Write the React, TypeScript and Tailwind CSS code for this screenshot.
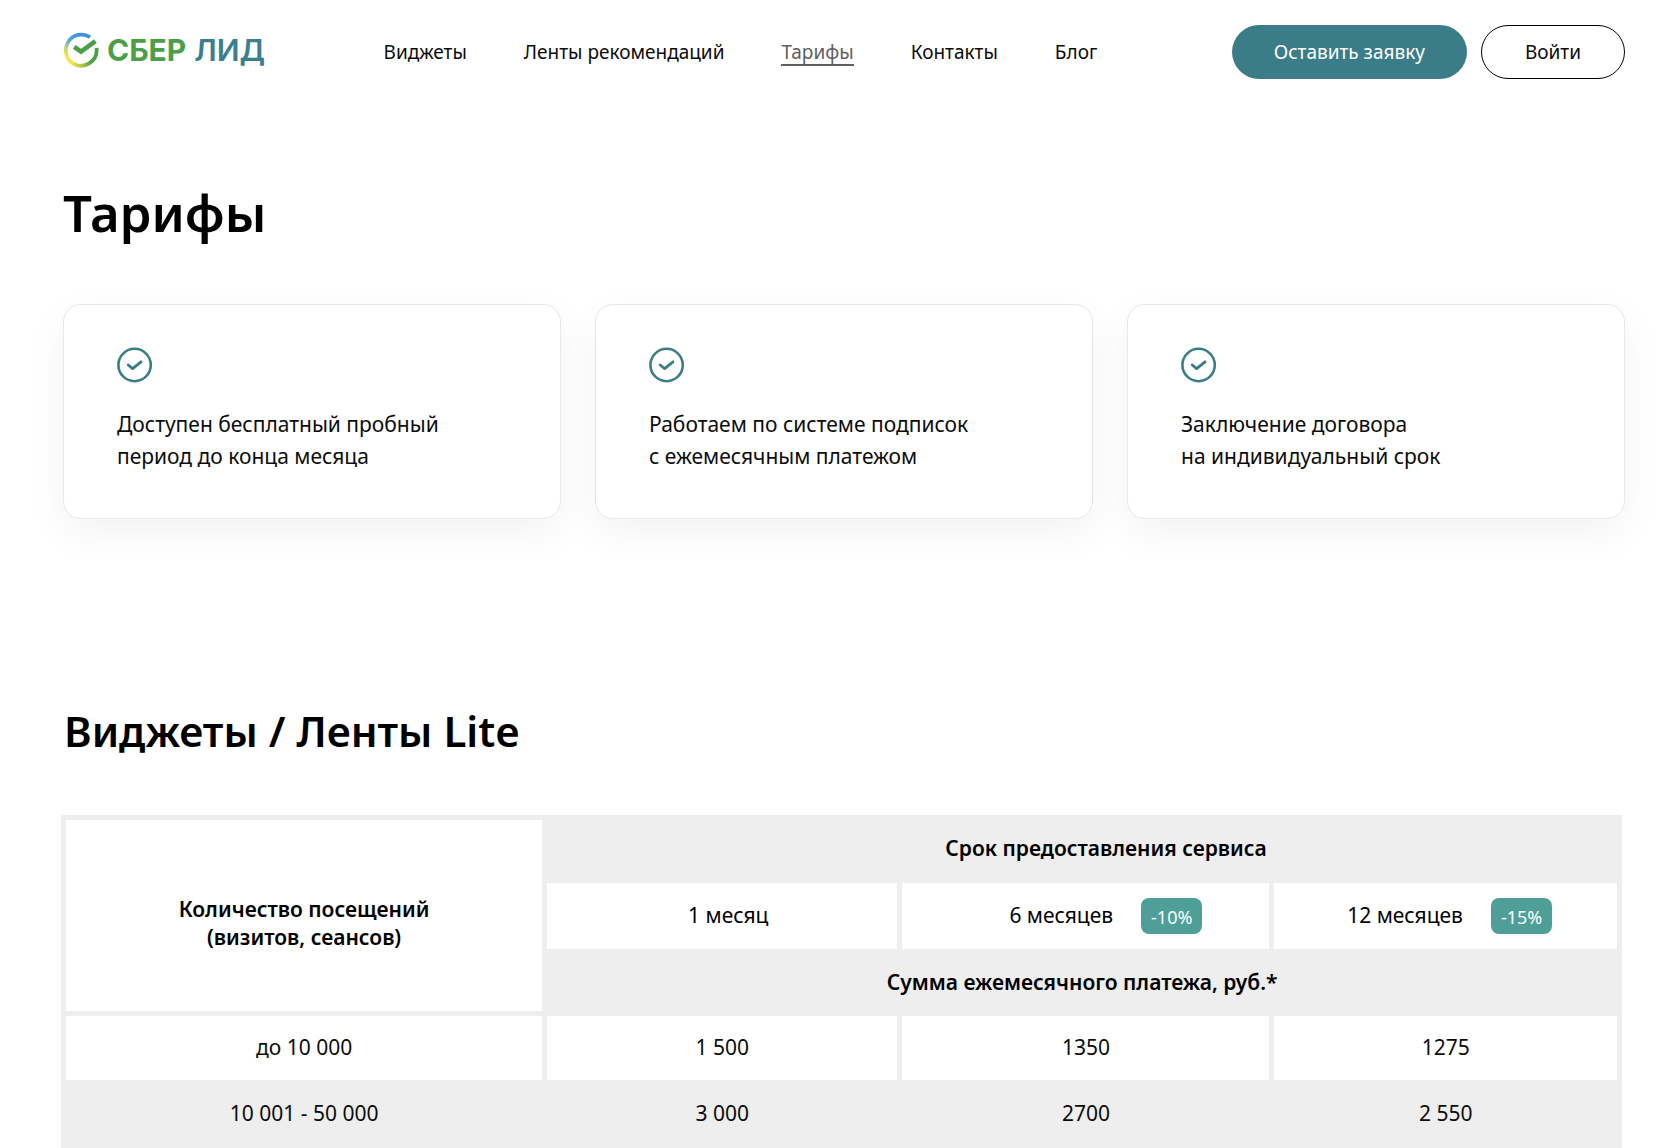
const navLinks = [
    { label: "Виджеты", href: "#widgets" },
    { label: "Ленты рекомендаций", href: "#feeds" },
    { label: "Тарифы", href: "#tariffs", active: true },
    { label: "Контакты", href: "#contacts" },
    { label: "Блог", href: "#blog" },
];

const benefits = [
    ["Доступен бесплатный пробный", "период до конца месяца"],
    ["Работаем по системе подписок", "с ежемесячным платежом"],
    ["Заключение договора", "на индивидуальный срок"],
];

const prices = [
    ["до 10 000", "1 500", "1350", "1275"],
    ["10 001 - 50 000", "3 000", "2700", "2 550"],
];

function Logo() {
    return (
        <a href="#" className="mb-1 flex items-center gap-2 font-['Inter',sans-serif] text-[30px] leading-9 font-bold">
            <svg viewBox="0 0 36 36" className="size-9" fill="none" aria-hidden="true">
                <defs>
                    <linearGradient id="ring" x1="24" y1="3" x2="8" y2="32" gradientUnits="userSpaceOnUse">
                        <stop offset="0" stopColor="#3a8fe0" />
                        <stop offset="0.3" stopColor="#4a9bea" />
                        <stop offset="0.65" stopColor="#b5d67c" />
                        <stop offset="0.85" stopColor="#f3e54a" />
                    </linearGradient>
                    <linearGradient id="ringEnd" x1="9" y1="32" x2="28" y2="28" gradientUnits="userSpaceOnUse">
                        <stop offset="0" stopColor="#f3e54a" />
                        <stop offset="0.5" stopColor="#a3c94a" />
                        <stop offset="1" stopColor="#4a9f47" />
                    </linearGradient>
                </defs>
                <path d="M9.8 31.4A15.7 15.7 0 0 0 33.5 16" stroke="url(#ringEnd)" strokeWidth="3.8" />
                <path d="M27 5.1A15.7 15.7 0 0 0 10 31.5" stroke="url(#ring)" strokeWidth="3.8" />
                <path d="M11.2 14.8L18 19.6L32.4 9.2" stroke="#4a9f47" strokeWidth="4.6" />
            </svg>
            <span className="text-[#4a9f47]">СБЕР</span>
            <span className="font-semibold text-[#3a7f8d]">ЛИД</span>
        </a>
    );
}

function Header() {
    return (
        <header className="flex items-center justify-between pt-[25px] pr-[55px] pl-[63px]">
            <Logo />
            <nav className="flex gap-[57px] pt-0.5 pr-4 text-[19px] leading-6">
                {navLinks.map((link) => (
                    <a
                        key={link.label}
                        href={link.href}
                        className={link.active ? "border-b-2 border-[#5f5f5f] text-[#5f5f5f]" : "border-b-2 border-transparent"}
                    >
                        {link.label}
                    </a>
                ))}
            </nav>
            <div className="flex gap-3.5 text-[19px] leading-6">
                <button className="h-[54px] rounded-full bg-[#3a7d89] px-[42px] text-white">Оставить заявку</button>
                <button className="h-[54px] rounded-full border border-black px-[43px]">Войти</button>
            </div>
        </header>
    );
}

function BenefitCard({ lines }: { lines: string[] }) {
    return (
        <li className="rounded-[18px] border border-[#e8e8e8] bg-white px-[53px] pt-[42px] pb-[46px] shadow-[0_14px_40px_rgba(0,0,0,0.05)]">
            <svg viewBox="0 0 36 36" className="size-9" fill="none" stroke="#3a7d89" strokeWidth="2.6" aria-hidden="true">
                <circle cx="17.6" cy="18" r="16.2" />
                <path d="M11.2 18L15.6 21.6L24 14.8" strokeWidth="2.8" strokeLinecap="round" strokeLinejoin="round" />
            </svg>
            <p className="mt-[25px] text-[21px] leading-8">
                {lines[0]}
                <br />
                {lines[1]}
            </p>
        </li>
    );
}

function Discount({ value }: { value: string }) {
    return (
        <span className="flex h-9 items-center rounded-lg bg-[#4f9f99] px-2.5 pt-0.5 text-[18px] leading-6 text-white">{value}</span>
    );
}

function PriceTable() {
    return (
        <table className="w-full table-fixed border-separate border-spacing-[5px] bg-[#eee] text-center text-[21px] leading-7">
            <colgroup>
                <col className="w-[31%]" />
                <col className="w-[22.8%]" />
                <col className="w-[23.9%]" />
                <col className="w-[22.3%]" />
            </colgroup>
            <thead className="text-black">
                <tr className="h-[58px]">
                    <th rowSpan={3} scope="col" className="bg-white pt-3.5 font-semibold">
                        Количество посещений
                        <br />
                        (визитов, сеансов)
                    </th>
                    <th colSpan={3} scope="colgroup" className="pb-0.5 pl-12 font-semibold">Срок предоставления сервиса</th>
                </tr>
                <tr className="h-[66px]">
                    <th scope="col" className="bg-white pb-0.5 pl-3 font-normal">1 месяц</th>
                    <th scope="col" className="bg-white font-normal">
                        <div className="flex items-center justify-center gap-7 pl-10">
                            <span className="pb-0.5">6 месяцев</span>
                            <Discount value="-10%" />
                        </div>
                    </th>
                    <th scope="col" className="bg-white font-normal">
                        <div className="flex items-center justify-center gap-7 pl-2">
                            <span className="pb-0.5">12 месяцев</span>
                            <Discount value="-15%" />
                        </div>
                    </th>
                </tr>
                <tr className="h-[57px]">
                    <th colSpan={3} scope="colgroup" className="pb-0.5 font-semibold">Сумма ежемесячного платежа, руб.*</th>
                </tr>
            </thead>
            <tbody>
                {prices.map((row) => (
                    <tr key={row[0]} className="h-16 odd:bg-white even:h-[58px]">
                        {row.map((cell) => (
                            <td key={cell} className="pb-0.5">{cell}</td>
                        ))}
                    </tr>
                ))}
            </tbody>
        </table>
    );
}

export default function App() {
    return (
        <div className="bg-white font-['Noto_Sans',sans-serif] text-[#0b0b0b]">
            <Header />
            <main>
                <section className="pt-[101px] pr-[55px] pl-[63px]">
                    <h1 className="text-[51px] leading-16 font-semibold text-black">Тарифы</h1>
                    <ul className="mt-[60px] grid grid-cols-3 gap-[34px]">
                        {benefits.map((lines) => (
                            <BenefitCard key={lines[0]} lines={lines} />
                        ))}
                    </ul>
                </section>
                <section className="pt-[184px] pr-[58px] pl-[61px]">
                    <h2 className="pl-[3px] text-[42px] leading-14 font-semibold text-black">Виджеты / Ленты Lite</h2>
                    <div className="mt-14">
                        <PriceTable />
                    </div>
                </section>
            </main>
        </div>
    );
}
